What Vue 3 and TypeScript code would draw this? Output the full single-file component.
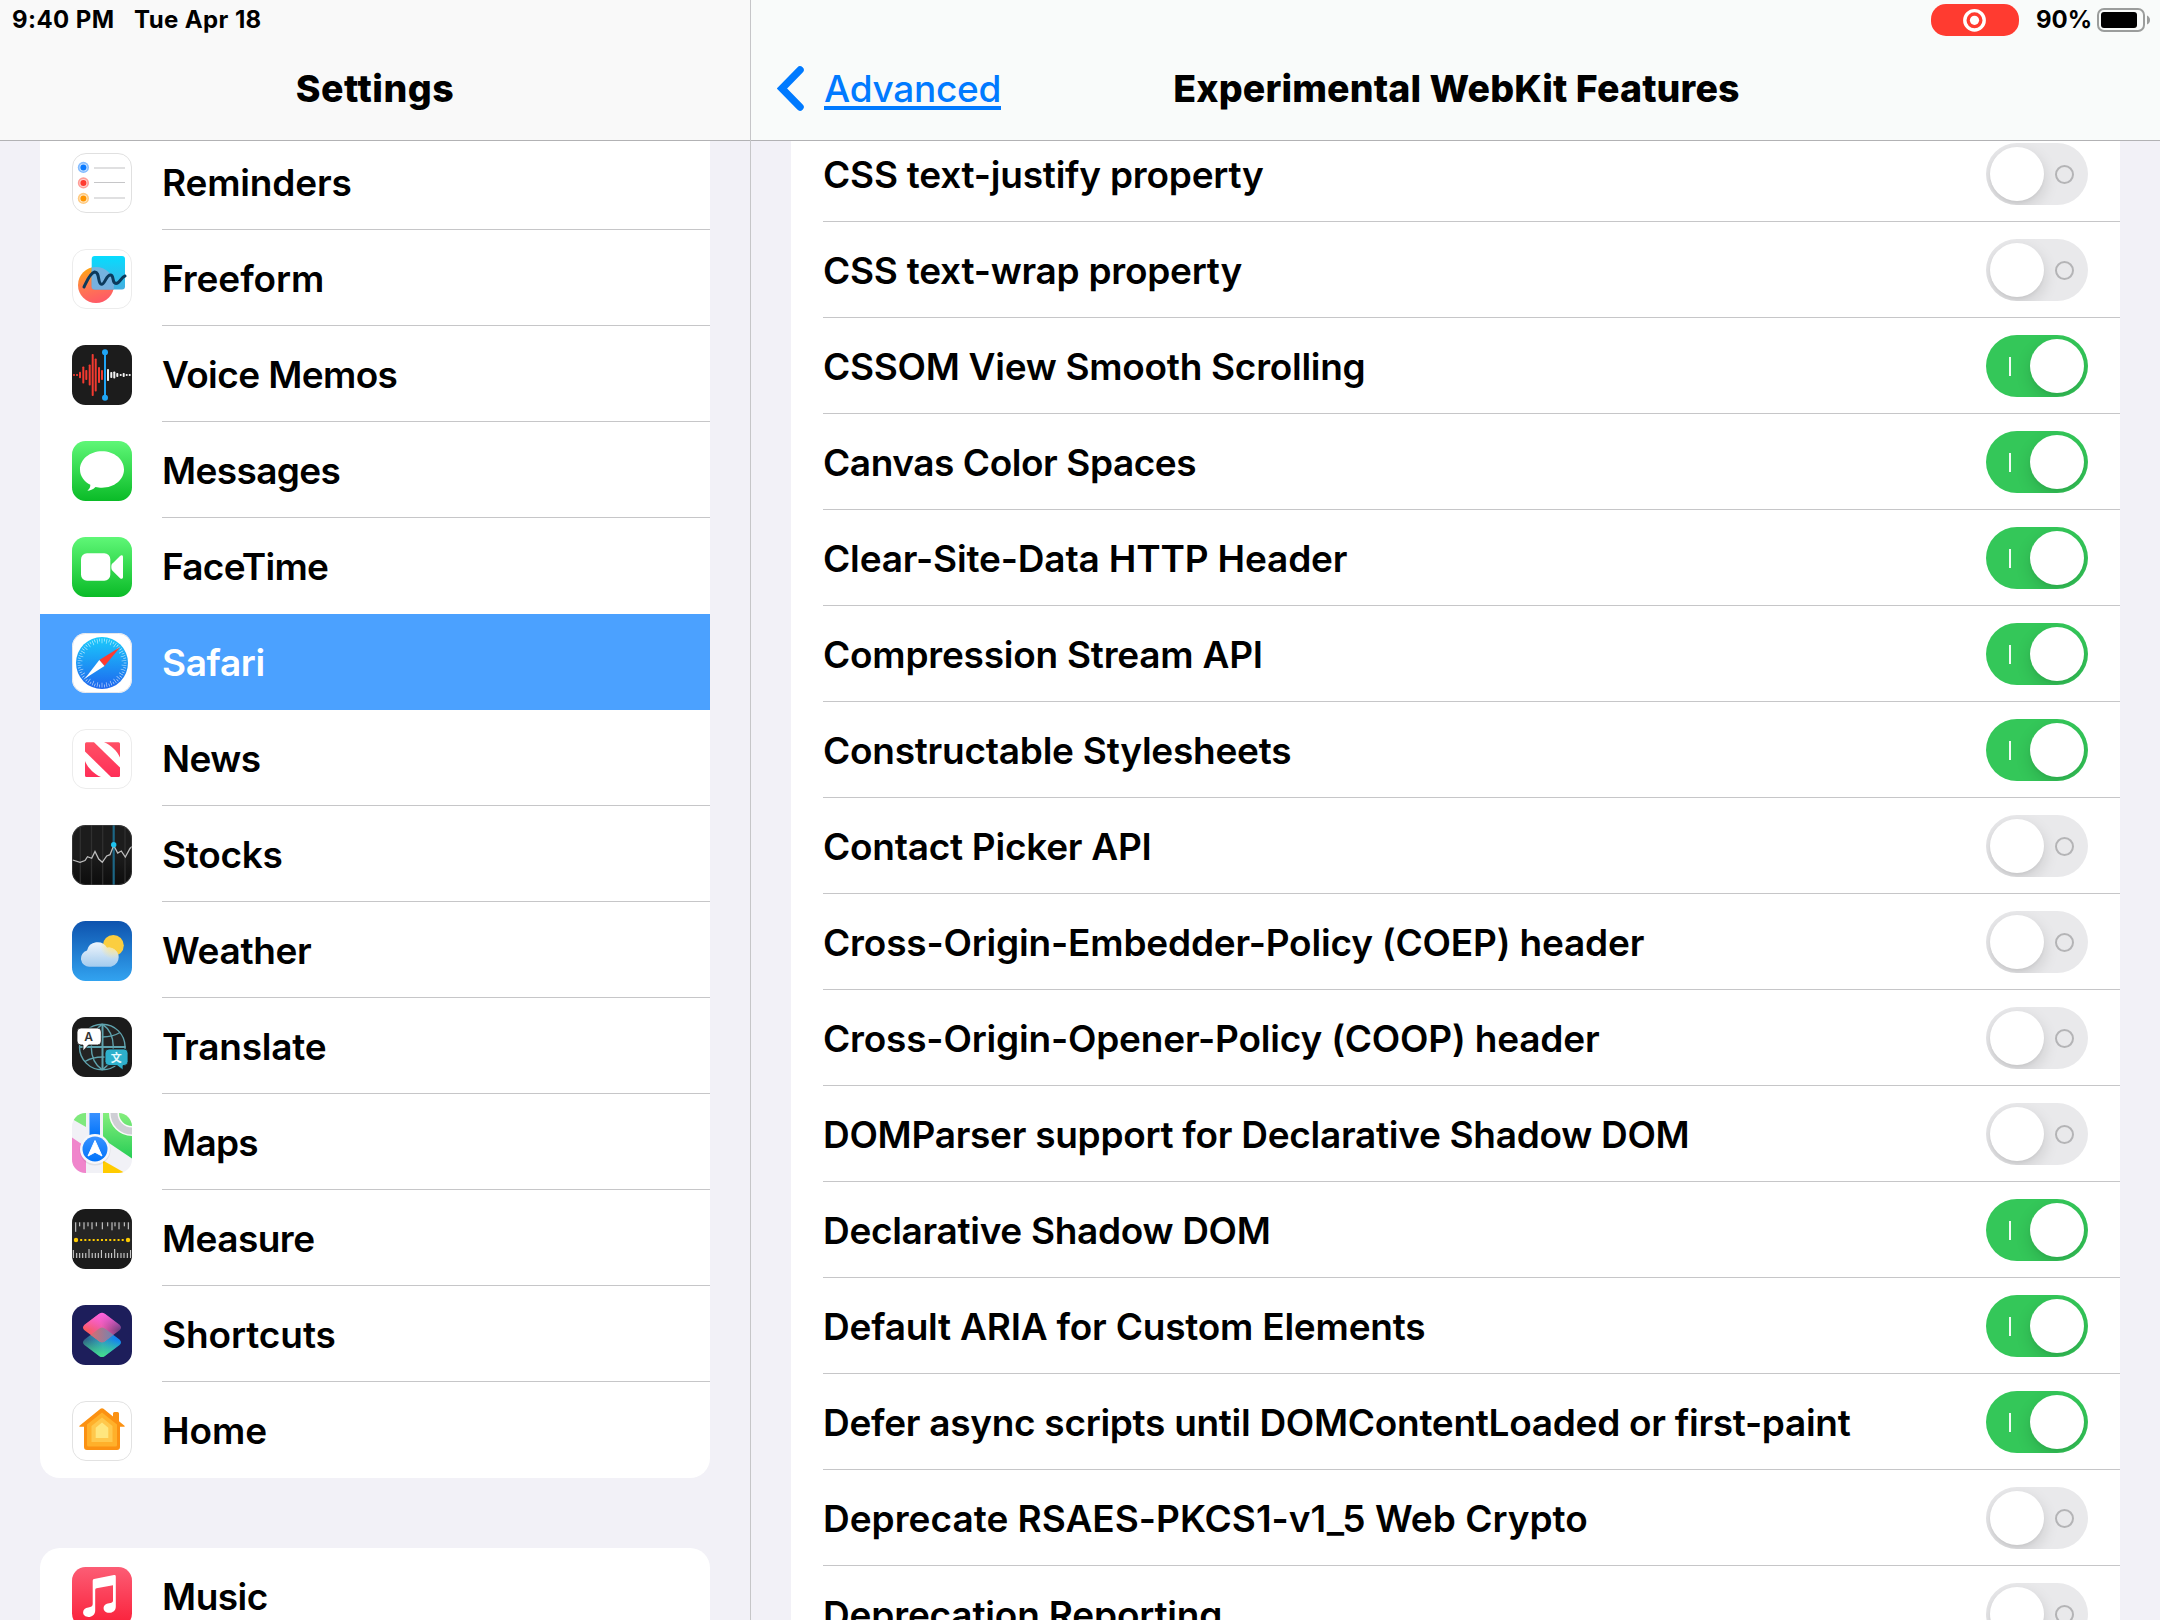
<script setup lang="ts">
interface App { name: string; icon: string; tracking: number }
interface Feature { name: string; on: boolean; tracking: number }

// Tracking values are letter-spacing in pixels.
const apps: App[] = [
  { name: 'Reminders', icon: 'reminders', tracking: -0.17 },
  { name: 'Freeform', icon: 'freeform', tracking: -0.1 },
  { name: 'Voice Memos', icon: 'voice', tracking: -0.6 },
  { name: 'Messages', icon: 'messages', tracking: -0.62 },
  { name: 'FaceTime', icon: 'facetime', tracking: -0.74 },
  { name: 'Safari', icon: 'safari', tracking: -0.38 },
  { name: 'News', icon: 'news', tracking: -0.6 },
  { name: 'Stocks', icon: 'stocks', tracking: -0.3 },
  { name: 'Weather', icon: 'weather', tracking: -0.32 },
  { name: 'Translate', icon: 'translate', tracking: -0.23 },
  { name: 'Maps', icon: 'maps', tracking: -0.7 },
  { name: 'Measure', icon: 'measure', tracking: -0.55 },
  { name: 'Shortcuts', icon: 'shortcuts', tracking: -0.09 },
  { name: 'Home', icon: 'home', tracking: -0.1 },
]
const media: App[] = [{ name: 'Music', icon: 'music', tracking: -0.5 }]
const groups: App[][] = [apps, media]
const selected = 'Safari'

const features: Feature[] = [
  { name: 'CSS text-justify property', on: false, tracking: -0.22 },
  { name: 'CSS text-wrap property', on: false, tracking: -0.24 },
  { name: 'CSSOM View Smooth Scrolling', on: true, tracking: -0.28 },
  { name: 'Canvas Color Spaces', on: true, tracking: -0.43 },
  { name: 'Clear-Site-Data HTTP Header', on: true, tracking: -0.16 },
  { name: 'Compression Stream API', on: true, tracking: -0.23 },
  { name: 'Constructable Stylesheets', on: true, tracking: -0.24 },
  { name: 'Contact Picker API', on: false, tracking: -0.25 },
  { name: 'Cross-Origin-Embedder-Policy (COEP) header', on: false, tracking: -0.18 },
  { name: 'Cross-Origin-Opener-Policy (COOP) header', on: false, tracking: -0.19 },
  { name: 'DOMParser support for Declarative Shadow DOM', on: false, tracking: -0.28 },
  { name: 'Declarative Shadow DOM', on: true, tracking: -0.31 },
  { name: 'Default ARIA for Custom Elements', on: true, tracking: -0.22 },
  { name: 'Defer async scripts until DOMContentLoaded or first-paint', on: true, tracking: -0.29 },
  { name: 'Deprecate RSAES-PKCS1-v1_5 Web Crypto', on: false, tracking: 0.01 },
  { name: 'Deprecation Reporting', on: false, tracking: -0.17 },
]

// Waveform bars: [x, height]
const redBars = [[2, 2], [5, 2], [8, 6.5], [11.3, 17], [14.3, 10], [17.7, 21], [20.7, 42], [23.7, 33], [27, 16], [30, 10]]
const whiteBars = [[36, 12], [39.3, 6], [42.3, 7], [45.3, 4], [48.7, 2], [51.7, 4], [54.7, 2], [57.7, 2]]
// Ruler ticks: [x, height]
const topTicks = [[3.7, 9.5], [7.7, 4], [12, 7], [16, 4], [20, 7], [24.3, 4], [30.3, 7], [35.7, 4], [40, 8], [43, 4], [47, 7], [52.3, 4], [56.3, 7]]
const bottomTicks = [[1.3, 8], [4.7, 5], [7.7, 5], [10.7, 5], [13.8, 5], [17, 9], [20.2, 5], [23.3, 5], [26.3, 5], [29.4, 8], [33.7, 5], [36.7, 5], [39.6, 5], [42.7, 9], [45.7, 5], [49, 5], [52, 5], [55.3, 5], [58.6, 8]]
const dialTicks = Array.from({ length: 60 }, (_, i) => i * 6)
</script>

<template>
  <div class="screen">
    <aside class="pane side">
      <header class="bar">
        <div class="status"><span class="time">9:40 PM</span><span class="date">Tue Apr 18</span></div>
        <div class="nav"><h1 class="nav-title">Settings</h1></div>
      </header>
      <div class="scroll">
        <section v-for="(group, g) in groups" :key="g" class="card" :class="{ first: g === 0 }">
          <div v-for="(app, i) in group" :key="app.name" class="row" :class="{ selected: app.name === selected }">
            <svg class="icon" viewBox="0 0 60 60">
              <g v-if="app.icon === 'reminders'">
                <rect x=".5" y=".5" width="59" height="59" rx="13.5" fill="#fff" stroke="#e0e0e0" />
                <g v-for="(c, k) in ['#0a7aff', '#ff3b30', '#ff9500']" :key="c" :fill="c">
                  <circle cx="11.4" :cy="14.4 + k * 15.5" r="5.6" opacity=".5" />
                  <circle cx="11.4" :cy="14.4 + k * 15.5" r="4" fill="#fff" opacity=".55" />
                  <circle cx="11.4" :cy="14.4 + k * 15.5" r="3" />
                </g>
                <path d="M22 15h31M22 45h31" stroke="#e0e0e1" stroke-width="2" />
                <path d="M22 29.5h31" stroke="#c6c6c8" />
              </g>
              <g v-else-if="app.icon === 'freeform'">
                <defs>
                  <linearGradient id="ffb" x2="0" y2="1"><stop stop-color="#06dcff" /><stop offset="1" stop-color="#45aee0" /></linearGradient>
                  <linearGradient id="ffo" x1=".2" x2=".5" y2="1"><stop stop-color="#ffa80c" /><stop offset=".5" stop-color="#ff7a50" /><stop offset="1" stop-color="#ff5a66" /></linearGradient>
                  <clipPath id="ffc"><rect x="19.7" y="7" width="33.3" height="33.5" rx="3" /></clipPath>
                </defs>
                <rect x=".5" y=".5" width="59" height="59" rx="13.5" fill="#fff" stroke="#ececec" />
                <circle cx="24" cy="36" r="18" fill="url(#ffo)" />
                <rect x="19.7" y="7" width="33.3" height="33.5" rx="3" fill="url(#ffb)" />
                <circle cx="24" cy="36" r="18" fill="#7db0de" clip-path="url(#ffc)" opacity=".9" />
                <path d="M12 38C15 32 18 24 22.5 23C28 22.500 25.500 35 29.500 35.300C33 35.500 34 26 38.500 26C42.500 26 39.500 34.500 44 34.500C48 34.500 49 28 53 27" fill="none" stroke="#0c3a5c" stroke-width="3" stroke-linecap="round" />
              </g>
              <g v-else-if="app.icon === 'voice'">
                <rect width="60" height="60" rx="13.5" fill="#1c1c1c" />
                <rect v-for="b in redBars" :key="b[0]" :x="b[0] - 1" :y="30 - b[1] / 2" width="2" :height="b[1]" rx=".8" fill="#f23a30" />
                <rect v-for="b in whiteBars" :key="b[0]" :x="b[0] - 1" :y="30 - b[1] / 2" width="2" :height="b[1]" rx=".8" fill="#f4f4f4" />
                <rect x="32" y="7" width="2" height="46" fill="#1fa5f5" />
                <circle cx="33" cy="7.300" r="3" fill="#1fa5f5" /><circle cx="33" cy="52.700" r="3" fill="#1fa5f5" />
              </g>
              <g v-else-if="app.icon === 'messages'">
                <defs><linearGradient id="grn" x2="0" y2="1"><stop stop-color="#5ff777" /><stop offset="1" stop-color="#0abb27" /></linearGradient></defs>
                <rect width="60" height="60" rx="13.5" fill="url(#grn)" />
                <path d="M30 10.200C42.200 10.200 52 18.300 52 28.500S42.200 46.700 30 46.700C27.500 46.700 25.500 46.500 23.500 46C21 48.500 18 49.700 15.400 49.700C17.500 48 18.500 46 18.300 43.800C12 40.500 8 35 8 28.500C8 18.300 17.800 10.200 30 10.200Z" fill="#fff" />
              </g>
              <g v-else-if="app.icon === 'facetime'">
                <defs><linearGradient id="grn2" x2="0" y2="1"><stop stop-color="#5ff777" /><stop offset="1" stop-color="#0abb27" /></linearGradient></defs>
                <rect width="60" height="60" rx="13.5" fill="url(#grn2)" />
                <rect x="9" y="16.200" width="29.300" height="27.500" rx="6" fill="#fff" />
                <path d="M39.300 30C39.300 27.500 40 26.800 41 26L47.800 19.200C49.500 17.600 51 18.200 51 20V40C51 41.900 49.500 42.500 47.800 41L41 34.200C40 33.200 39.300 32.500 39.300 30Z" fill="#fff" />
              </g>
              <g v-else-if="app.icon === 'safari'">
                <defs><linearGradient id="saf" x2="0" y2="1"><stop stop-color="#1bcbfc" /><stop offset="1" stop-color="#1e66ee" /></linearGradient></defs>
                <rect width="60" height="60" rx="13.500" fill="#fff" />
                <rect x=".5" y=".5" width="59" height="59" rx="13" fill="none" stroke="#d8dbe2" stroke-opacity=".7" />
                <circle cx="30" cy="30" r="26" fill="url(#saf)" />
                <rect v-for="(a, k) in dialTicks" :key="a" x="29.700" y="5.500" width=".6" :height="k % 2 ? 2.800 : 4.800" fill="#fff" opacity=".8" :transform="`rotate(${a} 30 30)`" />
                <path d="M48.300 14L27.300 27L32.500 33Z" fill="#ff3b30" />
                <path d="M13 45.500L27.300 27L32.500 33Z" fill="#fff" />
              </g>
              <g v-else-if="app.icon === 'news'">
                <defs><linearGradient id="nws" gradientUnits="userSpaceOnUse" x1="0" y1="13" x2="0" y2="48"><stop stop-color="#ff5065" /><stop offset="1" stop-color="#ff2f58" /></linearGradient></defs>
                <rect x=".5" y=".5" width="59" height="59" rx="13.5" fill="#fff" stroke="#ececec" />
                <g fill="url(#nws)">
                  <path d="M14.500 13.300H22L48 38.500V46.500Q48 48 46.500 48H39L13 22.500V14.800Q13 13.300 14.500 13.300Z" />
                  <path d="M32 13.300H46.500Q48 13.300 48 14.800V28.500C45.500 22.500 38.500 15.500 32 13.300Z" />
                  <path d="M13 32C15.500 38.500 22.500 45.500 29 48H14.500Q13 48 13 46.500Z" />
                </g>
              </g>
              <g v-else-if="app.icon === 'stocks'">
                <defs>
                  <linearGradient id="stk" x2="0" y2="1"><stop offset=".5" stop-color="#1c1c1c" /><stop offset="1" stop-color="#0c0c0c" /></linearGradient>
                  <clipPath id="stc"><rect width="60" height="60" rx="13.500" /></clipPath>
                </defs>
                <g clip-path="url(#stc)">
                  <rect width="60" height="60" fill="url(#stk)" />
                  <path d="M8.300 0V60M19.500 0V60M30.700 0V60M53 0V60" stroke="#303030" stroke-width="1.300" />
                  <path d="M41.700 0V60" stroke="#1c6685" stroke-width="2.200" />
                  <path d="M.7 35L8 37.300L13 35.500L15.500 31.700L19.700 33.300L23 26.500L26.700 34L30.300 37.300L34.700 31L38 29.700L41.700 20.500L45.700 28L49.300 26L53.300 32L58 23.500L60 21.500" fill="none" stroke="#bdbdbd" stroke-width="1.300" />
                  <circle cx="41.700" cy="19.700" r="2.700" fill="#1ec3f0" />
                </g>
                <rect x=".5" y=".5" width="59" height="59" rx="13" fill="none" stroke="#555" stroke-opacity=".45" />
              </g>
              <g v-else-if="app.icon === 'weather'">
                <defs>
                  <linearGradient id="sky" x2="0" y2="1"><stop stop-color="#0e53ae" /><stop offset="1" stop-color="#32a3f0" /></linearGradient>
                  <linearGradient id="cld" gradientUnits="userSpaceOnUse" x1="0" y1="19" x2="0" y2="46"><stop stop-color="#f6f9fd" /><stop offset="1" stop-color="#a3cbee" /></linearGradient>
                  <radialGradient id="glow"><stop stop-color="#ffe484" /><stop offset="1" stop-color="#ffe484" stop-opacity="0" /></radialGradient>
                  <clipPath id="cldc"><path d="M17.500 45.700A8.200 8.200 0 0 1 15 29.600A10.800 10.800 0 0 1 35 26.800A9.500 9.500 0 1 1 39 45.700Z" /></clipPath>
                </defs>
                <rect width="60" height="60" rx="13.500" fill="url(#sky)" />
                <circle cx="41.300" cy="24.500" r="10.500" fill="#fbce40" />
                <g clip-path="url(#cldc)"><rect width="60" height="60" fill="url(#cld)" /><circle cx="41" cy="25" r="13" fill="url(#glow)" /></g>
              </g>
              <g v-else-if="app.icon === 'translate'">
                <rect width="60" height="60" rx="13.500" fill="#1b1b1b" />
                <g fill="none" stroke="#5fa3ae" stroke-width="1.400">
                  <circle cx="30.300" cy="30" r="22.800" fill="#242424" />
                  <path d="M30.500 7V53M7.500 30H53.500" stroke-width="2" />
                  <path d="M30.300 7.200C45 17 45 43 30.300 52.800M30.300 7.200C15.600 17 15.600 43 30.300 52.800M13 15.500C23 21.500 38 21.500 48 15.500M13 44.500C23 38.500 38 38.500 48 44.500" />
                </g>
                <path d="M9 11H25.500Q29.300 11 29.300 15V24Q29.300 28 25.500 28H16.500L11 34V28H9Q5 28 5 24V15Q5 11 9 11Z" fill="#fff" stroke="#1b1b1b" stroke-width=".8" />
                <path d="M37 32H52Q56 32 56 36V44.500Q56 48.500 52 48.500H51V53L45 48.500H37Q33 48.500 33 44.500V36Q33 32 37 32Z" fill="#2eb0cc" stroke="#1b1b1b" stroke-width=".8" />
                <text x="16.500" y="24" font-size="12" font-weight="600" text-anchor="middle" fill="#333">A</text>
                <text class="cjk" x="44.200" y="44.500" font-size="11" font-weight="700" text-anchor="middle" fill="#e8fbff">文</text>
              </g>
              <g v-else-if="app.icon === 'maps'">
                <defs>
                  <clipPath id="mpc"><rect width="60" height="60" rx="13.500" /></clipPath>
                  <linearGradient id="mpg" x2="0" y2="1"><stop stop-color="#84ee7c" /><stop offset="1" stop-color="#27cd55" /></linearGradient>
                  <linearGradient id="mpb" x2="0" y2="1"><stop stop-color="#3a92ff" /><stop offset="1" stop-color="#0073fa" /></linearGradient>
                </defs>
                <g clip-path="url(#mpc)">
                  <rect width="60" height="60" fill="#f1f1f6" />
                  <path d="M0 6L14 14V0H0Z" fill="#7fe97c" />
                  <path d="M0 24.500L14 34V60H0Z" fill="#f085cc" />
                  <path d="M31 47.500L53 60H31Z" fill="#ffcb00" />
                  <path d="M31 0H60V45.500L31 26Z" fill="url(#mpg)" />
                  <circle cx="60" cy="0" r="18" fill="none" stroke="#fafafa" stroke-width="10" />
                  <circle cx="60" cy="0" r="18" fill="none" stroke="#cfcfd5" stroke-width="7" />
                  <rect x="17.500" width="10.500" height="24" fill="url(#mpb)" />
                  <circle cx="23" cy="37" r="15.500" fill="#000" opacity=".07" />
                  <circle cx="23" cy="36" r="15" fill="#f7f7fa" />
                  <circle cx="23" cy="36" r="12.500" fill="url(#mpb)" />
                  <path d="M23 27.500L30 43L23 39.300L16 43Z" fill="#fff" stroke="#fff" stroke-width="1" stroke-linejoin="round" />
                </g>
              </g>
              <g v-else-if="app.icon === 'measure'">
                <rect width="60" height="60" rx="13.500" fill="#1a1a1a" />
                <rect y="13" width="60" height="36" fill="#252525" />
                <rect v-for="t in topTicks" :key="t[0]" :x="t[0] - .5" y="13.300" width="1" :height="t[1]" fill="#dcdcdc" />
                <rect v-for="t in bottomTicks" :key="t[0]" :x="t[0] - .5" :y="49 - t[1]" width="1" :height="t[1]" fill="#dcdcdc" />
                <circle cx="4" cy="31" r="2.200" fill="#ffcc00" /><circle cx="56" cy="31" r="2.200" fill="#ffcc00" />
                <path d="M8.200 31H53" stroke="#ffcc00" stroke-width="2" stroke-dasharray="2 2.150" />
              </g>
              <g v-else-if="app.icon === 'shortcuts'">
                <defs>
                  <linearGradient id="sc1" x1="0" y1=".6" x2="1" y2=".4"><stop stop-color="#ff5a4c" /><stop offset=".5" stop-color="#e95aa6" /><stop offset="1" stop-color="#5a3a78" /></linearGradient>
                  <linearGradient id="sc1b" x2="0" y2="1"><stop stop-color="#ff62e0" /><stop offset=".6" stop-color="#ff62e0" stop-opacity="0" /></linearGradient>
                  <linearGradient id="sc2" x1="0" y1=".5" x2="1" y2=".4"><stop stop-color="#2f5a80" /><stop offset=".5" stop-color="#2e9bc0" /><stop offset="1" stop-color="#0a7cff" /></linearGradient>
                  <linearGradient id="sc2b" x2="0" y2="1"><stop offset=".4" stop-color="#45e08c" stop-opacity="0" /><stop offset="1" stop-color="#45e08c" /></linearGradient>
                  <linearGradient id="sc3" x2="1" y2="0"><stop stop-color="#f8665c" /><stop offset="1" stop-color="#4e8cc8" /></linearGradient>
                  <clipPath id="scc"><path d="M26.500 24L12.500 34.500Q9.500 37.300 12.500 40L26.500 50.500Q30 53.500 33.500 50.500L47.500 40Q50.500 37.300 47.500 34.500L33.500 24Q30 21 26.500 24Z" /></clipPath>
                </defs>
                <rect width="60" height="60" rx="13.500" fill="#1d1e5b" />
                <path d="M26.500 24L12.500 34.500Q9.500 37.300 12.500 40L26.500 50.500Q30 53.500 33.500 50.500L47.500 40Q50.500 37.300 47.500 34.500L33.500 24Q30 21 26.500 24Z" fill="url(#sc2)" />
                <path d="M26.500 24L12.500 34.500Q9.500 37.300 12.500 40L26.500 50.500Q30 53.500 33.500 50.500L47.500 40Q50.500 37.300 47.500 34.500L33.500 24Q30 21 26.500 24Z" fill="url(#sc2b)" />
                <path d="M26.500 9.300L12.500 19.800Q9.500 22.600 12.500 25.300L26.500 35.800Q30 38.800 33.500 35.800L47.500 25.300Q50.500 22.600 47.500 19.800L33.500 9.300Q30 6.300 26.500 9.300Z" fill="url(#sc1)" />
                <path d="M26.500 9.300L12.500 19.800Q9.500 22.600 12.500 25.300L26.500 35.800Q30 38.800 33.500 35.800L47.500 25.300Q50.500 22.600 47.500 19.800L33.500 9.300Q30 6.300 26.500 9.300Z" fill="url(#sc1b)" />
                <path clip-path="url(#scc)" d="M26.500 9.300L12.500 19.800Q9.500 22.600 12.500 25.300L26.500 35.800Q30 38.800 33.500 35.800L47.500 25.300Q50.500 22.600 47.500 19.800L33.500 9.300Q30 6.300 26.500 9.300Z" fill="url(#sc3)" />
              </g>
              <g v-else-if="app.icon === 'home'">
                <rect x=".5" y=".5" width="59" height="59" rx="13.5" fill="#fff" stroke="#e2e2e2" />
                <path d="M28.500 7.800Q30 6.500 31.500 7.800L41 15.500V12.500Q41 11 42.500 11H45.500Q47 11 47 12.500V20.300L52.500 24.700Q53.500 25.800 52 25.800H48V46Q48 49 45 49H15Q12 49 12 46V25.800H8Q6.500 25.800 7.500 24.700Z" fill="#fb9112" />
                <path d="M30 11.500L45 23.500V44Q45 45.500 43.500 45.500H16.500Q15 45.500 15 44V23.500Z" fill="#ffb02a" />
                <path d="M30 16.500L40.500 25V41H19.500V25Z" fill="#ffc84c" />
                <path d="M30 21.500L36.300 26.700V37H23.700V26.700Z" fill="#ffe67e" />
              </g>
              <g v-else>
                <defs><linearGradient id="mus" x2="0" y2="1"><stop stop-color="#fc5d75" /><stop offset="1" stop-color="#fa1e38" /></linearGradient></defs>
                <rect width="60" height="60" rx="13.500" fill="url(#mus)" />
                <path d="M42 8.100Q43.800 7.800 43.800 9.500V39.500C43.800 43.500 41 45.800 37 45.800C33.800 45.800 31.600 44 31.600 41.300C31.600 38.300 34 36.700 37 36.200C39.500 35.800 41 35.500 41 33.500V18.300L24.500 21.300Q23.200 21.600 23.200 23V43.500C23.200 47.800 20 50 16.500 50C13.300 50 11.100 48 11.100 45.300C11.100 42.500 13.300 41 16.300 40.500C19 40 20.700 39.500 20.700 37V13.800Q20.700 12.400 22 12.100Z" fill="#fff" />
              </g>
            </svg>
            <div class="cell" :class="{ last: i === group.length - 1 || app.name === selected || group[i + 1].name === selected }">
              <span class="label" :style="{ letterSpacing: app.tracking + 'px' }">{{ app.name }}</span>
            </div>
          </div>
        </section>
      </div>
    </aside>

    <main class="pane detail">
      <header class="bar">
        <div class="status right">
          <svg class="record" viewBox="0 0 88 32"><rect width="88" height="32" rx="15" fill="#ff3b30" /><circle cx="43.500" cy="16.300" r="9.700" fill="none" stroke="#fff" stroke-width="3.400" /><circle cx="43.500" cy="16.300" r="4.600" fill="#fff" /></svg>
          <span class="pct">90%</span>
          <svg class="battery" viewBox="0 0 54 24"><rect x="1" y="1" width="46" height="22" rx="6" fill="none" stroke="#9b9d9c" stroke-width="2" /><rect x="4" y="4" width="36" height="16" rx="3" /><path d="M50 7.500Q53 9 53 12T50 16.500Z" fill="#9b9d9c" /></svg>
        </div>
        <div class="nav">
          <a class="back"><svg class="chev" viewBox="0 0 27 45"><path d="M23 4L5 22.500L23 41" fill="none" stroke="#007aff" stroke-width="7.500" stroke-linecap="round" stroke-linejoin="miter" /></svg><span class="back-label">Advanced</span></a>
          <h1 class="nav-title wide">Experimental WebKit Features</h1>
        </div>
      </header>
      <div class="scroll">
        <section class="card first">
          <div v-for="f in features" :key="f.name" class="feature">
            <span class="label" :style="{ letterSpacing: f.tracking + 'px' }">{{ f.name }}</span>
            <span class="toggle" :class="{ on: f.on }"><i class="mark"></i><i class="knob"></i></span>
          </div>
        </section>
      </div>
    </main>
  </div>
</template>

<style>
body { margin: 0; overflow: hidden; }
</style>

<style scoped>
.screen {
  display: flex;
  width: 2160px;
  height: 1620px;
  overflow: hidden;
  background: #f2f1f7;
  color: #000;
  font-family: Inter, "Liberation Sans", sans-serif;
}
.pane { display: flex; flex-direction: column; height: 1620px; }
.side { box-sizing: border-box; width: 751px; border-right: 1px solid #c6c6c8; }
.detail { width: 1409px; }
.bar { box-sizing: border-box; flex: none; height: 141px; border-bottom: 1px solid #b2b2b4; background: #f9f9f9; }
.detail .bar { background: #f9fbfa; }
.status { display: flex; align-items: center; height: 40px; font-size: 24px; line-height: 28px; font-weight: 650; letter-spacing: .4px; white-space: nowrap; }
.time { margin-left: 12px; width: 122px; }
.right { justify-content: flex-end; }
.record { width: 88px; height: 32px; margin-right: 17px; }
.pct { width: 61px; letter-spacing: 0; }
.battery { width: 54px; height: 24px; margin-right: 9px; }
.nav { position: relative; display: flex; justify-content: center; align-items: center; height: 98px; }
.nav-title { margin: 0; font-size: 37.500px; line-height: 48px; font-weight: 780; letter-spacing: .5px; white-space: nowrap; }
.nav-title.wide { padding-left: 2px; letter-spacing: .13px; }
.back { position: absolute; left: 26px; top: 26px; display: flex; color: #007aff; }
.chev { width: 27px; height: 45px; }
.back-label { margin-left: 20px; height: 40px; line-height: 46px; font-size: 37px; font-weight: 450; letter-spacing: -.28px; border-bottom: 4px solid #007aff; }
.scroll { flex: 1; overflow: hidden; padding: 0 40px; }
.card { overflow: hidden; border-radius: 20px; background: #fff; }
.card.first { margin: -7px 0 70px; border-top-left-radius: 0; border-top-right-radius: 0; }
.detail .card.first { margin-top: -15px; }
.row { display: flex; height: 96px; padding-left: 32px; }
.row.selected { background: #4ba1ff; color: #fff; }
.icon { flex: none; width: 60px; height: 60px; margin: 19px 30px 0 0; }
.cell { box-sizing: border-box; flex: 1; border-bottom: 1px solid #c6c6c8; }
.cell.last { border-bottom-color: transparent; }
.label { display: block; line-height: 97px; font-size: 37px; font-weight: 575; white-space: nowrap; }
.feature { box-sizing: border-box; display: flex; justify-content: space-between; height: 96px; margin-left: 32px; padding-right: 32px; border-bottom: 1px solid #c6c6c8; }
.toggle { position: relative; width: 102px; height: 62px; margin-top: 17px; border-radius: 31px; background: #e9e9eb; overflow: hidden; }
.toggle.on { background: #34c759; }
.knob { position: absolute; left: 4px; top: 4px; width: 54px; height: 54px; border-radius: 50%; background: #fff; box-shadow: 0 6px 16px rgba(0, 0, 0, .14), 0 2px 3px rgba(0, 0, 0, .04); }
.on .knob { left: 44px; }
.mark { position: absolute; box-sizing: border-box; left: 69px; top: 22px; width: 19px; height: 19px; border: 2px solid #b4b4b6; border-radius: 50%; }
.on .mark { left: 23px; width: 2px; border: 0; border-radius: 0; background: #f0fbf3; }
.cjk { font-family: "Noto Sans CJK SC", sans-serif; }
</style>
